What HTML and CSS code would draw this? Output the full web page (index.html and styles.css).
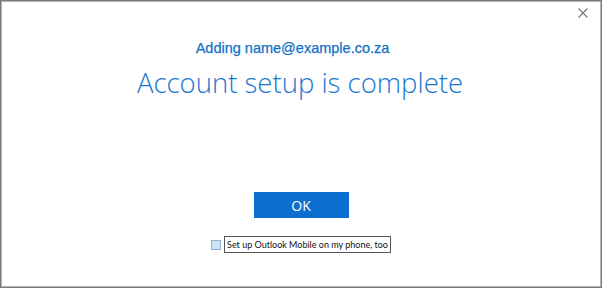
FILE: index.html
```html
<!DOCTYPE html>
<html>
<head>
<meta charset="utf-8">
<link rel="stylesheet" href="styles.css">
</head>
<body>
<div class="dialog">
  <div class="titlebar">
    <button class="close" aria-label="Close">
      <svg width="10" height="10" viewBox="0 0 10 10"><path d="M0.5 0.5 L9.5 9.5 M9.5 0.5 L0.5 9.5" stroke="#777" stroke-width="1.1" fill="none"/></svg>
    </button>
  </div>
  <div class="content">
    <div class="adding">Adding name@example.co.za</div>
    <h1 class="title">Account setup is complete</h1>
    <button class="ok">OK</button>
    <label class="check">
      <span class="box"></span>
      <span class="label">Set up Outlook Mobile on my phone, too</span>
    </label>
  </div>
</div>
</body>
</html>
```
FILE: styles.css
```css
* { box-sizing: border-box; }
html, body { margin: 0; padding: 0; background: #fff; }
.dialog {
  width: 602px;
  height: 288px;
  border: 1px solid #7a7a7a;
  box-shadow: inset 1px 1px 0 #b4b4b4, inset -1px -1px 0 #b4b4b4;
  background: #fff;
  display: flex;
  flex-direction: column;
}
.titlebar {
  height: 30px;
  display: flex;
  justify-content: flex-end;
  align-items: flex-start;
  padding: 7px 13px 0 0;
}
.close {
  border: 0;
  background: none;
  padding: 0;
  width: 10px;
  height: 10px;
  display: flex;
}
.content {
  display: flex;
  flex-direction: column;
  align-items: center;
}
.adding {
  font-family: "Liberation Sans", Arial, sans-serif;
  font-size: 14.5px;
  color: #1171c4;
  margin-top: 9px;
  margin-left: -17px;
  line-height: 16px;
  -webkit-text-stroke: 0.25px #1171c4;
}
.title {
  font-family: "Open Sans", sans-serif;
  font-weight: 300;
  font-size: 27.5px;
  color: #1a78d0;
  margin: 7px 0 0 -2px;
  line-height: 40px;
}
.ok {
  margin-top: 89px;
  width: 95px;
  height: 26px;
  border: 0;
  background: #0c6fcf;
  color: #fff;
  font-family: "Open Sans", sans-serif;
  font-size: 14px;
  padding: 0;
}
.check {
  margin-top: 18px;
  display: flex;
  align-items: center;
  gap: 3px;
  margin-left: 0;
}
.box {
  width: 10px;
  height: 10px;
  background: #cfe3f7;
  border: 1px solid #8bb3db;
}
.label {
  font-family: "Lato", sans-serif;
  font-size: 9px;
  color: #111;
  border: 1px solid #555;
  padding: 0 2px;
  line-height: 15px;
}
```
